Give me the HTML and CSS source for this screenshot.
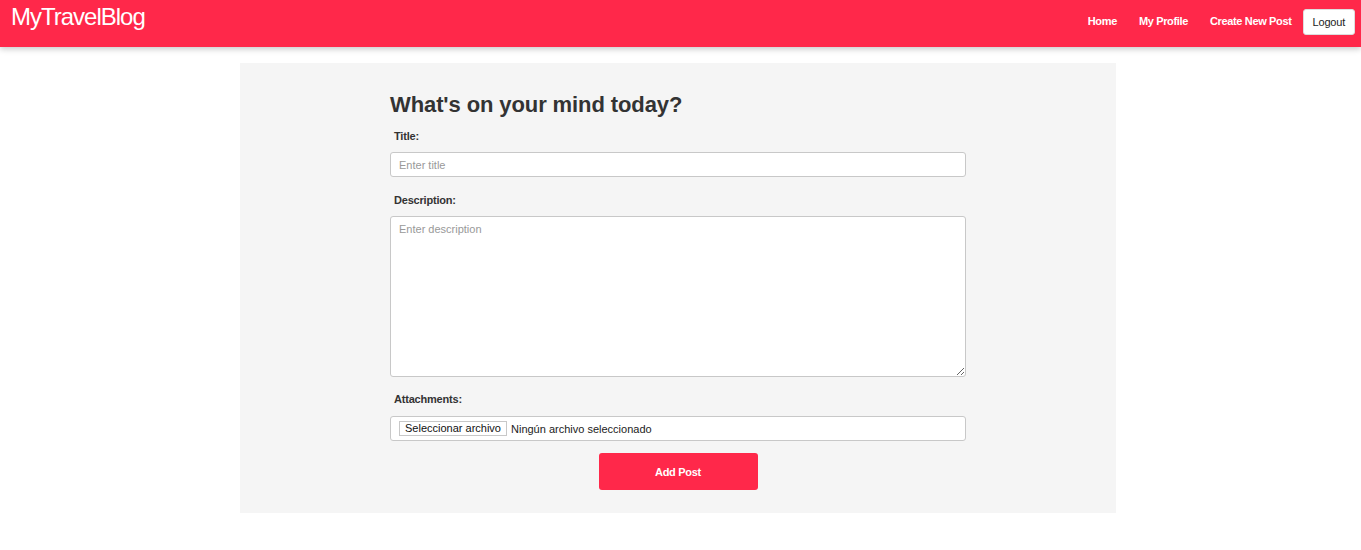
FILE: index.html
```html
<!DOCTYPE html>
<html lang="en">
<head>
<meta charset="utf-8">
<title>MyTravelBlog</title>
<link rel="stylesheet" href="styles.css">
</head>
<body>
<header class="navbar">
  <a class="brand" href="#">MyTravelBlog</a>
  <nav class="nav">
    <a class="nav-link" href="#">Home</a>
    <a class="nav-link" href="#">My Profile</a>
    <a class="nav-link" href="#">Create New Post</a>
    <button class="logout" type="button">Logout</button>
  </nav>
</header>
<main class="panel">
  <form class="post-form">
    <h2 class="heading">What's on your mind today?</h2>
    <label class="label" for="title">Title:</label>
    <input class="field" id="title" type="text" placeholder="Enter title">
    <label class="label" for="desc">Description:</label>
    <textarea class="field area" id="desc" placeholder="Enter description"></textarea>
    <label class="label">Attachments:</label>
    <div class="file-box">
      <span class="file-btn">Seleccionar archivo</span>
      <span class="file-text">Ningún archivo seleccionado</span>
    </div>
    <button class="submit" type="button">Add Post</button>
  </form>
</main>
</body>
</html>
```
FILE: styles.css
```css
* { box-sizing: border-box; }
html, body { margin: 0; padding: 0; background: #fff; }
body { font-family: "Liberation Sans", Arial, Helvetica, sans-serif; color: #333; }

.navbar {
  height: 47px;
  background: #ff284a;
  display: flex;
  justify-content: space-between;
  align-items: flex-start;
  box-shadow: 0 2px 6px rgba(0, 0, 0, 0.22);
  position: relative;
  z-index: 1;
}
.brand {
  margin-left: 11px;
  padding-top: 2px;
  font-size: 24px;
  line-height: 30px;
  letter-spacing: -1px;
  color: #fff;
  text-decoration: none;
}
.nav { display: flex; align-items: flex-start; }
.nav-link {
  padding: 14px 11px 0;
  font-size: 11px;
  line-height: 15px;
  font-weight: bold;
  letter-spacing: -0.35px;
  color: #fff;
  text-decoration: none;
}
.logout {
  margin: 9px 6px 0 0;
  height: 26px;
  padding: 4px 9px;
  font-family: inherit;
  font-size: 11px;
  line-height: 15px;
  letter-spacing: -0.2px;
  color: #222;
  background: #fff;
  border: 1px solid #ddd;
  border-radius: 3px;
}

.panel {
  width: 876px;
  margin: 16px 0 0 240px;
  background: #f5f5f5;
  padding: 28px 150px 23px;
}
.post-form { display: flex; flex-direction: column; }
.heading {
  margin: 0 0 11px;
  font-size: 22px;
  line-height: 27px;
  font-weight: bold;
  color: #333;
  letter-spacing: -0.1px;
}
.label {
  margin-left: 4px;
  font-size: 11px;
  line-height: 15px;
  font-weight: bold;
  color: #333;
  letter-spacing: -0.2px;
}
.field {
  margin: 8px 0 16px;
  height: 25px;
  padding: 0 8px;
  font-family: inherit;
  font-size: 11px;
  color: #333;
  background: #fff;
  border: 1px solid #c8c8c8;
  border-radius: 3px;
  outline: none;
}
.field::placeholder { color: #999; }
.area {
  height: 161px;
  padding: 6px 8px;
  resize: vertical;
  margin-bottom: 15px;
}
.file-box {
  margin-top: 9px;
  height: 25px;
  display: flex;
  align-items: center;
  gap: 4px;
  padding: 0 8px;
  background: #fff;
  border: 1px solid #c8c8c8;
  border-radius: 3px;
  font-size: 11px;
  color: #222;
}
.file-btn {
  height: 15px;
  line-height: 13px;
  padding: 0 5px;
  border: 1px solid #c8c8c8;
  background: #fff;
  color: #111;
}
.submit {
  align-self: center;
  margin-top: 12px;
  width: 159px;
  height: 37px;
  border: 0;
  border-radius: 3px;
  background: #ff284a;
  color: #fff;
  font-family: inherit;
  font-size: 11px;
  font-weight: bold;
  letter-spacing: -0.3px;
}
```
